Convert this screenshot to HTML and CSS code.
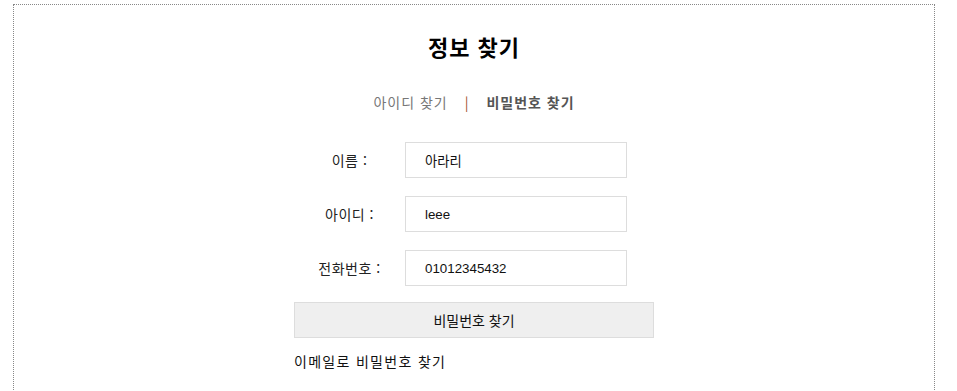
FILE: index.html
```html
<!DOCTYPE html>
<html lang="ko">
<head>
    <meta charset="UTF-8">
    <meta name="viewport" content="width=device-width, initial-scale=1.0">
    <title>정보 찾기</title>
    <link rel="stylesheet" href="styles.css">
</head>
<body>
    <div class="find-wrap">
        <h2 class="find-title">정보 찾기</h2>
        <div class="find-tabs">
            <a href="#" class="tab">아이디 찾기</a>
            <span class="sep">|</span>
            <a href="#" class="tab active">비밀번호 찾기</a>
        </div>
        <form class="find-form">
            <div class="rows">
                <label for="name">이름 :</label>
                <input type="text" id="name" value="아라리">
                <label for="userId">아이디 :</label>
                <input type="text" id="userId" value="leee">
                <label for="phone">전화번호 :</label>
                <input type="text" id="phone" value="01012345432">
            </div>
            <button type="button" class="find-btn">비밀번호 찾기</button>
            <a href="#" class="email-link">이메일로 비밀번호 찾기</a>
        </form>
    </div>
</body>
</html>
```

FILE: styles.css
```css
body { margin: 0; background: #fff; font-family: "Noto Sans CJK KR", "Noto Sans", sans-serif; color: #111; }
.find-wrap { width: 920px; min-height: 420px; margin: 4px 0 0 13px; padding-top: 26px; border: 1px dotted #888; }
.find-title { margin: 0; font-size: 22px; line-height: 30px; font-weight: bold; letter-spacing: 1px; text-align: center; color: #000; }
.find-tabs { margin-top: 31px; font-size: 14px; line-height: 20px; letter-spacing: 1px; text-align: center; }
.find-tabs .tab { color: #777; text-decoration: none; }
.find-tabs .tab.active { color: #555; font-weight: bold; }
.find-tabs .sep { color: #a0522d; margin: 0 12px; }
.find-form { width: 360px; margin: 30px auto 0; }
.rows { display: grid; grid-template-columns: 111px 222px; row-gap: 18px; align-items: center; }
.rows label { text-align: center; font-size: 14px; letter-spacing: 0.5px; color: #222; }
.rows input { box-sizing: border-box; width: 222px; height: 36px; padding: 0 19px; border: 1px solid #ddd; font-family: "Liberation Sans", "Noto Sans CJK KR", sans-serif; font-size: 13.33px; color: #111; outline: none; }
.find-btn { display: block; box-sizing: border-box; width: 360px; height: 36px; margin-top: 16px; background: #efefef; border: 1px solid #ddd; font-family: inherit; font-size: 14px; color: #111; cursor: pointer; }
.email-link { display: block; margin-top: 13px; font-size: 14px; line-height: 20px; letter-spacing: 1.3px; color: #111; text-decoration: none; }
```
